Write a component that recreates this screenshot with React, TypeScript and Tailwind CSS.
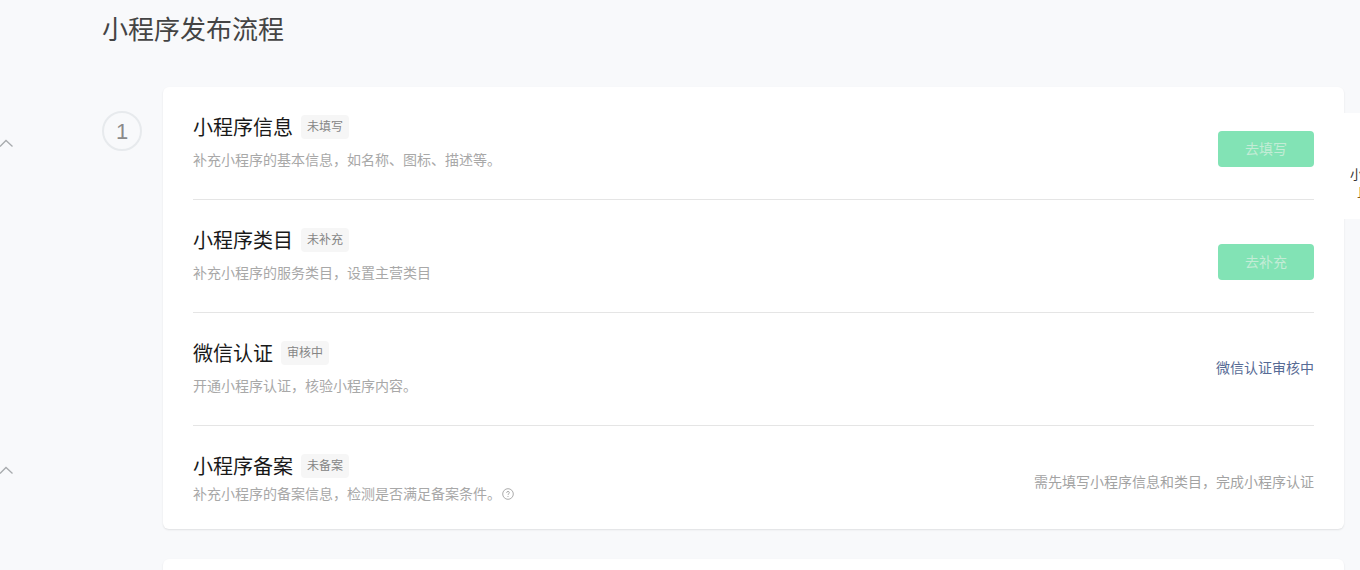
import React from "react";

const cjk = "font-['Liberation_Sans','Noto_Sans_CJK_SC',sans-serif]";

const steps = [
  {
    title: "小程序信息",
    tag: "未填写",
    desc: "补充小程序的基本信息，如名称、图标、描述等。",
    action: "去填写",
    kind: "button",
  },
  {
    title: "小程序类目",
    tag: "未补充",
    desc: "补充小程序的服务类目，设置主营类目",
    action: "去补充",
    kind: "button",
  },
  {
    title: "微信认证",
    tag: "审核中",
    desc: "开通小程序认证，核验小程序内容。",
    action: "微信认证审核中",
    kind: "link",
  },
  {
    title: "小程序备案",
    tag: "未备案",
    desc: "补充小程序的备案信息，检测是否满足备案条件。",
    action: "需先填写小程序信息和类目，完成小程序认证",
    kind: "note",
    help: true,
  },
];

const Chevron = ({ className }: { className: string }) => (
  <svg className={className} width="14" height="8" viewBox="0 0 14 8" fill="none">
    <path d="M0 7.5L6 1.5L12.5 7.5" stroke="#a8abae" strokeWidth="1.3" />
  </svg>
);

export default function App() {
  return (
    <div className={`${cjk} relative h-[570px] w-[1360px] overflow-hidden bg-[#f8f9fb]`}>
      <div className="flex h-full">
        <div className="w-[102px] shrink-0">
          <Chevron className="mt-[139px] block" />
          <Chevron className="mt-[319px] block" />
        </div>
        <div className="flex-1">
          <h1 className="mt-[11px] h-[38px] text-[26px] leading-[38px] font-normal text-[#444444]">
            小程序发布流程
          </h1>
          <div className="mt-[38px] flex">
            <div className="mt-6 flex h-10 w-10 shrink-0 items-center justify-center rounded-full border-2 border-[#e7eaed] pt-px text-[22px] text-[#8a8a8a]">
              1
            </div>
            <div className="ml-[21px]">
              <div className="w-[1181px] rounded-md bg-white px-[30px] shadow-[0_1px_2px_rgba(0,0,0,0.1)]">
                {steps.map((step, i) => (
                  <div
                    key={step.title}
                    className={`flex justify-between ${
                      i === 3 ? "h-[103px]" : "h-[113px] border-b border-[#e5e5e5]"
                    }`}
                  >
                    <div className="pt-7">
                      <div className="flex items-center">
                        <span className="pt-[2px] text-[20px] leading-[22px] text-[#191919]">{step.title}</span>
                        <span className="ml-2 rounded-sm bg-[#f6f6f6] px-1.5 text-xs leading-6 text-[#858585]">
                          {step.tag}
                        </span>
                      </div>
                      <div
                        className={`flex items-center text-sm leading-5 text-[#a8a8a8] ${
                          i === 3 ? "mt-1.5" : "mt-[11px]"
                        }`}
                      >
                        {step.desc}
                        {step.help && (
                          <svg className="ml-[1px]" width="12" height="12" viewBox="0 0 12 12" fill="none">
                            <circle cx="6" cy="6" r="5.3" stroke="#a3a3a3" strokeWidth="0.9" />
                            <path
                              d="M4.6 4.8C4.6 4 5.2 3.4 6 3.4C6.8 3.4 7.4 4 7.4 4.7C7.4 5.6 6 5.7 6 6.9"
                              stroke="#a3a3a3"
                              strokeWidth="0.9"
                            />
                            <circle cx="6" cy="8.5" r="0.6" fill="#a3a3a3" />
                          </svg>
                        )}
                      </div>
                    </div>
                    {step.kind === "button" && (
                      <button className="mt-11 h-9 w-24 rounded bg-[#82e3b5] text-sm text-[#c3ecd6]">
                        {step.action}
                      </button>
                    )}
                    {step.kind === "link" && (
                      <span className="mt-[45px] text-sm leading-5 text-[#576b95]">{step.action}</span>
                    )}
                    {step.kind === "note" && (
                      <span className="mt-[46px] text-sm leading-5 text-[#a3a3a3]">{step.action}</span>
                    )}
                  </div>
                ))}
              </div>
              <div className="mt-[30px] h-20 w-[1181px] rounded-md bg-white shadow-[0_1px_2px_rgba(0,0,0,0.1)]" />
            </div>
          </div>
        </div>
      </div>
      <div className="absolute left-[1344px] top-[113px] h-[106px] w-4 overflow-hidden bg-white">
        <div className="ml-[6px] mt-[53px] w-[60px] text-[13px] leading-[18px]">
          <div className="text-[#353535]">小程序</div>
          <div className="ml-[7px] text-[#8a5a1c]">且</div>
        </div>
      </div>
    </div>
  );
}
